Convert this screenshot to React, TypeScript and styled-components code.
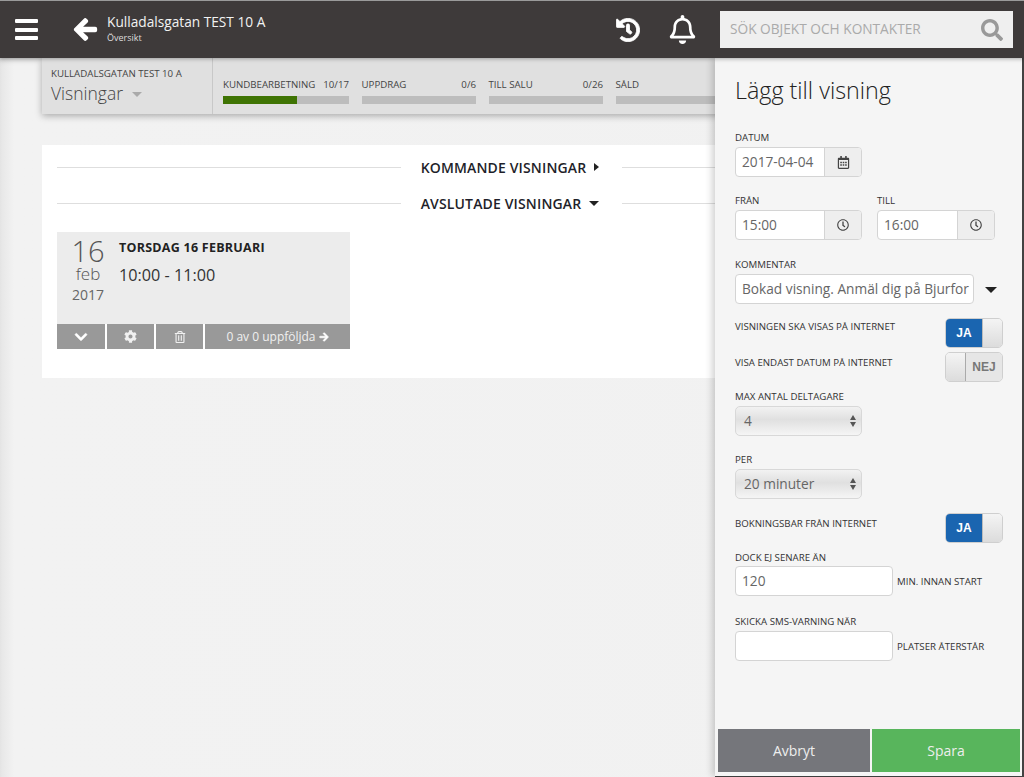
import React from "react";
import styled, { createGlobalStyle } from "styled-components";
import { FaArrowLeft, FaArrowRight, FaChevronDown, FaCog, FaHistory, FaRegBell, FaRegCalendarAlt, FaRegClock, FaRegTrashAlt, FaSearch } from "react-icons/fa";

const Global = createGlobalStyle`
  html, body { margin: 0; padding: 0; background: #f0f0f0; }
  * { box-sizing: border-box; }
  body { font-family: "Open Sans", "Liberation Sans", sans-serif; color: #333; }
`;
const Page = styled.div`
  position: relative; width: 1024px; height: 777px; overflow: hidden;
  background: linear-gradient(90deg, #e6e6e6 0, #f2f2f2 14px, #f1f1f1 100%);
  border-top: 1px solid #9a9a9a;
`;
const Header = styled.header`
  height: 57px; background: #3e3a3a; display: flex; align-items: center; color: #fff;
  position: relative; z-index: 3; box-shadow: 0 1px 4px rgba(0,0,0,.3);
`;
const Burger = styled.div`
  width: 23px; margin-left: 15px; display: flex; flex-direction: column; gap: 4.5px;
  span { display: block; height: 4px; background: #fff; border-radius: 1px; }
`;
const Back = styled.div`
  margin-left: 35px; width: 25px; height: 25px; font-size: 25px; line-height: 0;
  svg { stroke: currentColor; stroke-width: 30; }
`;
const Titles = styled.div`
  margin-left: 9px; flex: 1; display: flex; flex-direction: column; margin-top: -3px;
`;
const Title = styled.div` font-size: 13.7px; line-height: 19px; color: #f2f2f2; `;
const Sub = styled.div` font-size: 9px; line-height: 12px; color: #ddd; margin-top: 1px; `;
const HeadIcon = styled.div<{ $ml: number; $size: number; $bold?: boolean }>`
  margin-left: ${p => p.$ml}px; font-size: ${p => p.$size}px; line-height: 0; color: #fff;
  svg { ${p => (p.$bold ? "stroke: currentColor; stroke-width: 18;" : "")} }
`;
const Search = styled.div`
  width: 293px; height: 37px; margin-left: 23px; margin-right: 11px; background: #efefef;
  display: flex; align-items: center; justify-content: space-between;
  padding: 0 10px 2px; color: #aaa; font-size: 13.7px;
  svg { font-size: 22px; color: #999; margin-top: 2px; }
`;
const Main = styled.main`
  padding-left: 42px; box-shadow: inset 0 6px 6px -4px rgba(0,0,0,.12); height: 719px;
`;
const Summary = styled.div`
  width: 1000px; height: 56px; background: #e0e0e0; display: flex;
  box-shadow: 0 2px 7px rgba(0,0,0,.3);
`;
const SummaryHead = styled.div`
  width: 171px; padding: 9px 0 0 9px; border-right: 1px solid #c8c8c8;
`;
const SummaryTitle = styled.div` font-size: 9.7px; line-height: 14px; color: #444; `;
const SummaryView = styled.div`
  font-size: 17.5px; font-weight: 300; line-height: 26px; color: #444; margin-top: -1px; display: flex; align-items: center; gap: 9px;
  &::after { content: ""; border: 5px solid transparent; border-top: 5px solid #aaa; border-bottom: 0; margin-top: 3px; }
`;
const Steps = styled.div` display: flex; gap: 12.5px; padding: 20px 0 0 10px; `;
const Step = styled.div<{ $w: number }>` width: ${p => p.$w}px; `;
const StepRow = styled.div`
  display: flex; justify-content: space-between; font-size: 9.7px; line-height: 13px; color: #444;
`;
const Track = styled.div` height: 8px; background: #bdbdbd; margin-top: 5px; `;
const Fill = styled.div` height: 100%; background: #3f7404; `;
const Card = styled.section`
  width: 939px; height: 233px; margin-top: 31px; background: #fff; padding: 4px 15px 0;
`;
const Divider = styled.div`
  display: flex; align-items: center; height: 36px;
  &::before, &::after { content: ""; flex: 1; height: 1px; background: #dedede; }
`;
const DividerLabel = styled.div<{ $w: number }>`
  width: ${p => p.$w}px; display: flex; align-items: center; justify-content: center; gap: 8px; padding-right: 3px;
  font-size: 14px; font-weight: 600; color: #1f1f2a; letter-spacing: .15px;
`;
const CaretRight = styled.i`
  border-left: 5px solid #222; border-top: 4.5px solid transparent; border-bottom: 4.5px solid transparent;
`;
const CaretDown = styled.i`
  border-top: 5px solid #222; border-left: 5px solid transparent; border-right: 5px solid transparent;
`;
const Event = styled.article` width: 293px; margin-top: 11px; `;
const EventBody = styled.div` height: 92px; background: #ececec; display: flex; `;
const DateCol = styled.div`
  width: 62px; flex: none; text-align: center; color: #777; padding-top: 4px;
`;
const Day = styled.div` font-size: 29px; line-height: 30px; font-weight: 300; color: #555; `;
const Month = styled.div` font-size: 17px; font-weight: 300; line-height: 16px; color: #555; `;
const Year = styled.div` font-size: 14px; line-height: 25px; color: #666; `;
const EventInfo = styled.div` padding-top: 7px; `;
const EventTitle = styled.div` font-size: 12.5px; font-weight: 700; line-height: 17px; color: #222; letter-spacing: .25px; `;
const EventTime = styled.div` font-size: 16.2px; line-height: 22px; margin-top: 8px; color: #333; `;
const EventBar = styled.div`
  height: 25px; display: grid; grid-template-columns: 48px 47px 47px 1fr; gap: 2px;
`;
const EventBtn = styled.div`
  background: #999; display: flex; align-items: center; justify-content: center; gap: 3px; font-size: 12px;
  color: #f0f0f0;
`;
const BoldArrow = styled(FaArrowRight)` stroke: currentColor; stroke-width: 30; color: #fff; `;
const BoldChevron = styled(FaChevronDown)` stroke: currentColor; stroke-width: 20; color: #fff; `;
const Panel = styled.aside`
  position: absolute; left: 715px; top: 57px; width: 307px; height: 718px; background: #f5f5f5;
  padding: 0 20px; box-shadow: -3px 0 7px rgba(0,0,0,.18), 0 1px 0 #444; z-index: 2;
  display: flex; flex-direction: column;
`;
const PanelEdge = styled.div`
  position: absolute; right: 0; top: 57px; width: 2px; height: 720px; background: #444;
`;
const PanelTitle = styled.h2`
  margin: 0; font-weight: 300; font-size: 23.3px; line-height: 32px; color: #222; padding-top: 16px; height: 72px;
`;
const Label = styled.div`
  font-size: 9.7px; line-height: 16px; height: 14px; color: #333; text-transform: uppercase;
`;
const Row = styled.div<{ $top: number; $gap?: number }>`
  display: flex; gap: ${p => p.$gap ?? 15}px; margin-top: ${p => p.$top}px; align-items: flex-start;
`;
const Field = styled.div<{ $top?: number }>` margin-top: ${p => p.$top ?? 0}px; `;
const Control = styled.div<{ $w: number }>`
  width: ${p => p.$w}px; height: 30px; margin-top: 3px; display: flex; background: #fff;
  border: 1px solid #d4d4d4; border-radius: 4px; font-size: 13.7px; color: #666; overflow: hidden;
`;
const ControlText = styled.div`
  flex: 1; min-width: 0; padding: 0 6px; line-height: 27px; white-space: nowrap; overflow: hidden;
`;
const Addon = styled.div`
  width: 37px; flex: none; background: #eee; border-left: 1px solid #d4d4d4; color: #444;
  display: flex; align-items: center; justify-content: center; font-size: 13px;
`;
const SelectBox = styled.div`
  width: 127px; height: 30px; margin-top: 3px; border: 1px solid #d8d8d8; border-radius: 5px;
  background: linear-gradient(#f2f2f2, #e0e0e0 45%, #f5f5f5 100%); font-size: 13.7px; color: #666;
  display: flex; align-items: center; justify-content: space-between; padding: 0 5px 2px 8px;
`;
const Updown = styled.div`
  display: flex; flex-direction: column; gap: 2px; margin-top: 2px;
  &::before, &::after { content: ""; border-left: 3.5px solid transparent; border-right: 3.5px solid transparent; }
  &::before { border-bottom: 5px solid #555; }
  &::after { border-top: 5px solid #555; }
`;
const ToggleRow = styled.div<{ $top: number }>`
  display: flex; justify-content: space-between; margin-top: ${p => p.$top}px; height: 30px; width: 268px;
`;
const ToggleLabel = styled(Label)<{ $drop: number }>` margin-top: ${p => p.$drop}px; `;
const Toggle = styled.div<{ $on: boolean }>`
  width: 58px; height: 30px; border: 1px solid #cfcfcf; border-radius: 5px; display: flex; overflow: hidden;
  flex-direction: ${p => (p.$on ? "row" : "row-reverse")};
  font-family: "Liberation Sans", Arial, sans-serif; font-weight: 700; font-size: 12px;
`;
const ToggleState = styled.div<{ $on: boolean }>`
  width: 36px; flex: none; display: flex; align-items: center; justify-content: center;
  background: ${p => (p.$on ? "#1a65b0" : "#e6e6e6")}; color: ${p => (p.$on ? "#fff" : "#777")};
`;
const ToggleKnob = styled.div<{ $on: boolean }>`
  flex: 1; background: linear-gradient(#f4f4f4, #dcdcdc);
  ${p => (p.$on ? "border-left: 1px solid #bbb;" : "border-right: 1px solid #aaa;")}
`;
const Suffix = styled.div`
  font-size: 9.7px; line-height: 32px; height: 30px; margin-top: 3px; color: #333; margin-left: -11px; white-space: nowrap;
`;
const DropCaret = styled.i`
  border-top: 6px solid #222; border-left: 6px solid transparent; border-right: 6px solid transparent;
  margin: 16px 0 0 -3px;
`;
const Actions = styled.div`
  position: absolute; left: 3px; right: 2px; bottom: 4px; height: 43px; display: grid; grid-template-columns: 152px 148px; gap: 2px;
`;
const Action = styled.div<{ $bg: string }>`
  background: ${p => p.$bg}; color: #eee; font-size: 14px; display: flex; align-items: center; justify-content: center;
`;

const steps = [
  { name: "KUNDBEARBETNING", done: 10, total: 17, w: 126 },
  { name: "UPPDRAG", done: 0, total: 6, w: 114.5 },
  { name: "TILL SALU", done: 0, total: 26, w: 114.5 },
  { name: "SÅLD", done: 0, total: 4, w: 114.5 },
];

const OnOff = ({ on }: { on: boolean }) => (
  <Toggle $on={on}>
    <ToggleState $on={on}>{on ? "JA" : "NEJ"}</ToggleState>
    <ToggleKnob $on={on} />
  </Toggle>
);

export default function App() {
  return (
    <Page>
      <Global />
      <Header>
        <Burger><span /><span /><span /></Burger>
        <Back><FaArrowLeft /></Back>
        <Titles>
          <Title>Kulladalsgatan TEST 10 A</Title>
          <Sub>Översikt</Sub>
        </Titles>
        <HeadIcon $ml={-1} $size={24} $bold><FaHistory /></HeadIcon>
        <HeadIcon $ml={28} $size={29}><FaRegBell /></HeadIcon>
        <Search>SÖK OBJEKT OCH KONTAKTER<FaSearch /></Search>
      </Header>
      <Main>
        <Summary>
          <SummaryHead>
            <SummaryTitle>KULLADALSGATAN TEST 10 A</SummaryTitle>
            <SummaryView>Visningar</SummaryView>
          </SummaryHead>
          <Steps>
            {steps.map(s => (
              <Step key={s.name} $w={s.w}>
                <StepRow><span>{s.name}</span><span>{s.done}/{s.total}</span></StepRow>
                <Track><Fill style={{ width: `${(s.done / s.total) * 100}%` }} /></Track>
              </Step>
            ))}
          </Steps>
        </Summary>
        <Card>
          <Divider><DividerLabel $w={221}>KOMMANDE VISNINGAR <CaretRight /></DividerLabel></Divider>
          <Divider><DividerLabel $w={221}>AVSLUTADE VISNINGAR <CaretDown /></DividerLabel></Divider>
          <Event>
            <EventBody>
              <DateCol>
                <Day>16</Day>
                <Month>feb</Month>
                <Year>2017</Year>
              </DateCol>
              <EventInfo>
                <EventTitle>TORSDAG 16 FEBRUARI</EventTitle>
                <EventTime>10:00 - 11:00</EventTime>
              </EventInfo>
            </EventBody>
            <EventBar>
              <EventBtn><BoldChevron size={14} /></EventBtn>
              <EventBtn><FaCog size={13} /></EventBtn>
              <EventBtn><FaRegTrashAlt size={12} /></EventBtn>
              <EventBtn>0 av 0 uppföljda <BoldArrow size={10} /></EventBtn>
            </EventBar>
          </Event>
        </Card>
      </Main>
      <Panel>
        <PanelTitle>Lägg till visning</PanelTitle>
        <Field>
          <Label>Datum</Label>
          <Control $w={127}><ControlText>2017-04-04</ControlText><Addon><FaRegCalendarAlt /></Addon></Control>
        </Field>
        <Row $top={16}>
          <Field>
            <Label>Från</Label>
            <Control $w={127}><ControlText>15:00</ControlText><Addon><FaRegClock size={12} /></Addon></Control>
          </Field>
          <Field>
            <Label>Till</Label>
            <Control $w={118}><ControlText>16:00</ControlText><Addon><FaRegClock size={12} /></Addon></Control>
          </Field>
        </Row>
        <Row $top={17}>
          <Field>
            <Label>Kommentar</Label>
            <Row $top={0} $gap={14}>
              <Control $w={239}><ControlText>Bokad visning. Anmäl dig på Bjurfor</ControlText></Control>
              <DropCaret />
            </Row>
          </Field>
        </Row>
        <ToggleRow $top={14}>
          <ToggleLabel $drop={1}>Visningen ska visas på internet</ToggleLabel>
          <OnOff on />
        </ToggleRow>
        <ToggleRow $top={4}>
          <ToggleLabel $drop={3}>Visa endast datum på internet</ToggleLabel>
          <OnOff on={false} />
        </ToggleRow>
        <Field $top={7}>
          <Label>Max antal deltagare</Label>
          <SelectBox>4<Updown /></SelectBox>
        </Field>
        <Field $top={16}>
          <Label>Per</Label>
          <SelectBox>20 minuter<Updown /></SelectBox>
        </Field>
        <ToggleRow $top={14}>
          <ToggleLabel $drop={3}>Bokningsbar från internet</ToggleLabel>
          <OnOff on />
        </ToggleRow>
        <Field $top={7}>
          <Label>Dock ej senare än</Label>
          <Row $top={-1}>
            <Control $w={158}><ControlText>120</ControlText></Control>
            <Suffix>MIN. INNAN START</Suffix>
          </Row>
        </Field>
        <Field $top={18}>
          <Label>Skicka SMS-varning när</Label>
          <Row $top={0}>
            <Control $w={158} />
            <Suffix>PLATSER ÅTERSTÅR</Suffix>
          </Row>
        </Field>
        <Actions>
          <Action $bg="#75767b">Avbryt</Action>
          <Action $bg="#58b55c">Spara</Action>
        </Actions>
      </Panel>
      <PanelEdge />
    </Page>
  );
}
